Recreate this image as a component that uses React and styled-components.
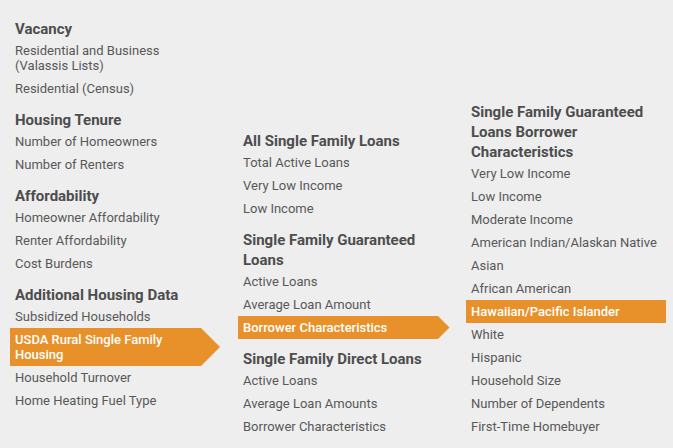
import styled, { createGlobalStyle } from "styled-components";

const GlobalStyle = createGlobalStyle`
  html, body {
    margin: 0;
    padding: 0;
    background: #eeeeee;
  }
  body {
    font-family: Roboto, "Liberation Sans", Arial, sans-serif;
  }
`;

const Page = styled.div`
  display: flex;
  align-items: flex-start;
  gap: 28px;
  padding-left: 10px;
  width: 673px;
  height: 448px;
  box-sizing: border-box;
  overflow: hidden;
`;

const Column = styled.div`
  display: flex;
  flex-direction: column;
  width: 200px;
  margin-top: ${(p) => p.$top}px;
  flex-shrink: 0;
`;

const Section = styled.div`
  display: flex;
  flex-direction: column;
  & + & {
    margin-top: 10px;
  }
`;

const Heading = styled.h3`
  margin: 0;
  padding: 0 5px;
  font-size: 15px;
  line-height: 20px;
  font-weight: 700;
  color: #4d4d4d;
`;

const List = styled.ul`
  list-style: none;
  margin: 0;
  padding: 0;
  width: ${(p) => p.$width}px;
`;

const Item = styled.li`
  position: relative;
  padding: 4px 5px;
  font-size: 13px;
  line-height: 15px;
  color: ${(p) => (p.$active ? "#ffffff" : "#585858")};
  font-weight: ${(p) => (p.$active ? 500 : 400)};
  background: ${(p) => (p.$active ? "#e8912a" : "transparent")};
  cursor: pointer;

  ${(p) =>
    p.$arrow &&
    `
    &::after {
      content: "";
      position: absolute;
      top: 0;
      bottom: 0;
      left: 100%;
      width: 40px;
      background: #e8912a;
      clip-path: polygon(0 0, var(--half) 50%, 0 100%);
    }
  `}
`;

const menus = [
  {
    top: 19,
    listWidth: 191,
    sections: [
      {
        title: "Vacancy",
        items: ["Residential and Business (Valassis Lists)", "Residential (Census)"],
      },
      {
        title: "Housing Tenure",
        items: ["Number of Homeowners", "Number of Renters"],
      },
      {
        title: "Affordability",
        items: ["Homeowner Affordability", "Renter Affordability", "Cost Burdens"],
      },
      {
        title: "Additional Housing Data",
        items: [
          "Subsidized Households",
          "USDA Rural Single Family Housing",
          "Household Turnover",
          "Home Heating Fuel Type",
        ],
      },
    ],
    active: "USDA Rural Single Family Housing",
    arrow: 19,
  },
  {
    top: 131,
    listWidth: 200,
    sections: [
      {
        title: "All Single Family Loans",
        items: ["Total Active Loans", "Very Low Income", "Low Income"],
      },
      {
        title: "Single Family Guaranteed Loans",
        items: ["Active Loans", "Average Loan Amount", "Borrower Characteristics"],
      },
      {
        title: "Single Family Direct Loans",
        items: ["Active Loans", "Average Loan Amounts", "Borrower Characteristics"],
      },
    ],
    active: "Borrower Characteristics",
    activeSection: 1,
    arrow: 11.5,
  },
  {
    top: 102,
    listWidth: 200,
    sections: [
      {
        title: "Single Family Guaranteed Loans Borrower Characteristics",
        items: [
          "Very Low Income",
          "Low Income",
          "Moderate Income",
          "American Indian/Alaskan Native",
          "Asian",
          "African American",
          "Hawaiian/Pacific Islander",
          "White",
          "Hispanic",
          "Household Size",
          "Number of Dependents",
          "First-Time Homebuyer",
        ],
      },
    ],
    active: "Hawaiian/Pacific Islander",
    arrow: 0,
  },
];

export default function App() {
  return (
    <>
      <GlobalStyle />
      <Page>
        {menus.map((menu, ci) => (
          <Column key={ci} $top={menu.top}>
            {menu.sections.map((section, si) => (
              <Section key={si}>
                <Heading>{section.title}</Heading>
                <List $width={menu.listWidth}>
                  {section.items.map((item) => {
                    const active =
                      item === menu.active &&
                      (menu.activeSection === undefined || menu.activeSection === si);
                    return (
                      <Item
                        key={item}
                        $active={active}
                        $arrow={active && menu.arrow > 0}
                        style={active ? { "--half": `${menu.arrow}px` } : undefined}
                      >
                        {item}
                      </Item>
                    );
                  })}
                </List>
              </Section>
            ))}
          </Column>
        ))}
      </Page>
    </>
  );
}
